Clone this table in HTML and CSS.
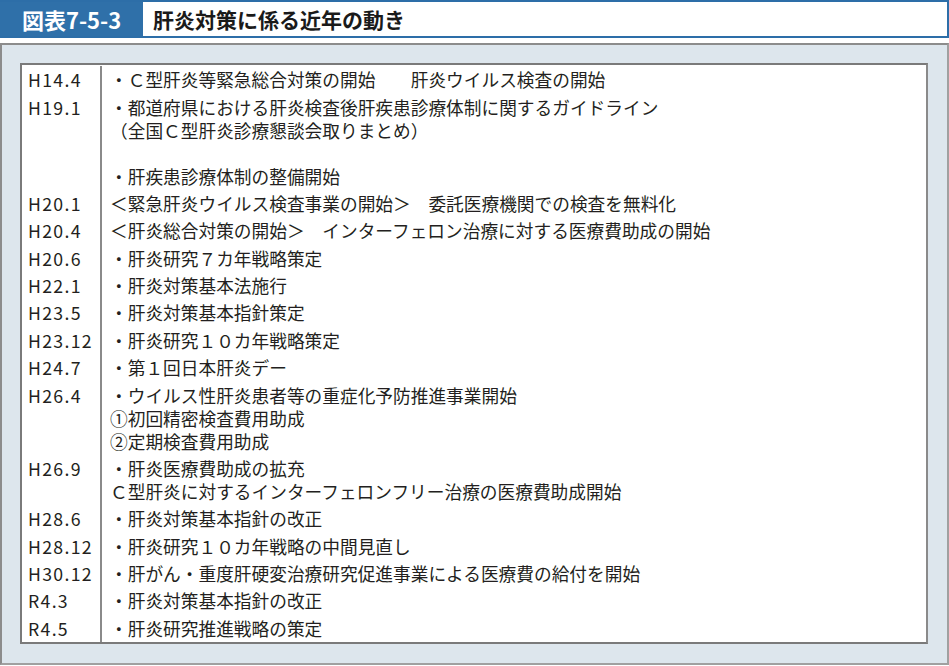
FILE: index.html
```html
<!DOCTYPE html>
<html lang="ja">
<head>
    <meta charset="UTF-8">
    <title>図表7-5-3 肝炎対策に係る近年の動き</title>
    <link rel="stylesheet" href="styles.css">
</head>
<body>
    <div class="fig-header">
        <div class="fig-label">図表7-5-3</div>
        <div class="fig-title">肝炎対策に係る近年の動き</div>
    </div>

    <div class="panel">
        <div class="timeline">
            <div class="row">
                <div class="date">H14.4</div>
                <div class="desc">・Ｃ型肝炎等緊急総合対策の開始　　肝炎ウイルス検査の開始</div>
            </div>
            <div class="row">
                <div class="date">H19.1</div>
                <div class="desc">・都道府県における肝炎検査後肝疾患診療体制に関するガイドライン<br>（全国Ｃ型肝炎診療懇談会取りまとめ）<br>&nbsp;<br>・肝疾患診療体制の整備開始</div>
            </div>
            <div class="row">
                <div class="date">H20.1</div>
                <div class="desc">＜緊急肝炎ウイルス検査事業の開始＞　委託医療機関での検査を無料化</div>
            </div>
            <div class="row">
                <div class="date">H20.4</div>
                <div class="desc">＜肝炎総合対策の開始＞　インターフェロン治療に対する医療費助成の開始</div>
            </div>
            <div class="row">
                <div class="date">H20.6</div>
                <div class="desc">・肝炎研究７カ年戦略策定</div>
            </div>
            <div class="row">
                <div class="date">H22.1</div>
                <div class="desc">・肝炎対策基本法施行</div>
            </div>
            <div class="row">
                <div class="date">H23.5</div>
                <div class="desc">・肝炎対策基本指針策定</div>
            </div>
            <div class="row">
                <div class="date">H23.12</div>
                <div class="desc">・肝炎研究１０カ年戦略策定</div>
            </div>
            <div class="row">
                <div class="date">H24.7</div>
                <div class="desc">・第１回日本肝炎デー</div>
            </div>
            <div class="row">
                <div class="date">H26.4</div>
                <div class="desc">・ウイルス性肝炎患者等の重症化予防推進事業開始<br>①初回精密検査費用助成<br>②定期検査費用助成</div>
            </div>
            <div class="row">
                <div class="date">H26.9</div>
                <div class="desc">・肝炎医療費助成の拡充<br>Ｃ型肝炎に対するインターフェロンフリー治療の医療費助成開始</div>
            </div>
            <div class="row">
                <div class="date">H28.6</div>
                <div class="desc">・肝炎対策基本指針の改正</div>
            </div>
            <div class="row">
                <div class="date">H28.12</div>
                <div class="desc">・肝炎研究１０カ年戦略の中間見直し</div>
            </div>
            <div class="row">
                <div class="date">H30.12</div>
                <div class="desc">・肝がん・重度肝硬変治療研究促進事業による医療費の給付を開始</div>
            </div>
            <div class="row">
                <div class="date">R4.3</div>
                <div class="desc">・肝炎対策基本指針の改正</div>
            </div>
            <div class="row">
                <div class="date">R4.5</div>
                <div class="desc">・肝炎研究推進戦略の策定</div>
            </div>
        </div>
    </div>
</body>
</html>
```

FILE: styles.css
```css
body {
    margin: 0;
    background: #ffffff;
    font-family: "Noto Sans CJK JP", "Noto Sans", sans-serif;
    color: #231f20;
}

/* header bar */
.fig-header {
    display: flex;
    height: 38px;
    box-sizing: border-box;
    border: 2px solid #2d6ea8;
    border-left: none;
}

.fig-label {
    width: 143px;
    background: #2f70a9;
    color: #ffffff;
    font-weight: 700;
    font-size: 22px;
    line-height: 34px;
    padding-left: 22px;
    box-sizing: border-box;
}

.fig-title {
    flex: 1;
    background: #ffffff;
    font-weight: 700;
    font-size: 21px;
    line-height: 34px;
    padding-left: 10px;
    color: #1a1a1a;
}

/* light blue panel */
.panel {
    margin-top: 5px;
    height: 622px;
    box-sizing: border-box;
    background: #dde6ed;
    border: 2px solid #8c8c8c;
    border-right-color: #a0a0a0;
    border-bottom-color: #a0a0a0;
    padding: 18px 19px 0 18px;
}

.timeline {
    background: #ffffff;
    border: 2px solid #7a7a7a;
    border-right-color: #8a8a8a;
    padding-top: 1px;
}

.row {
    display: grid;
    grid-template-columns: 80px 1fr;
    font-size: 17.7px;
    line-height: 23px;
}

.date {
    padding: 2.2px 0 2.2px 6px;
    border-right: 2px solid #8a8a8a;
    letter-spacing: 1.3px;
}

.desc {
    padding: 2.2px 0 2.2px 8px;
}
```
